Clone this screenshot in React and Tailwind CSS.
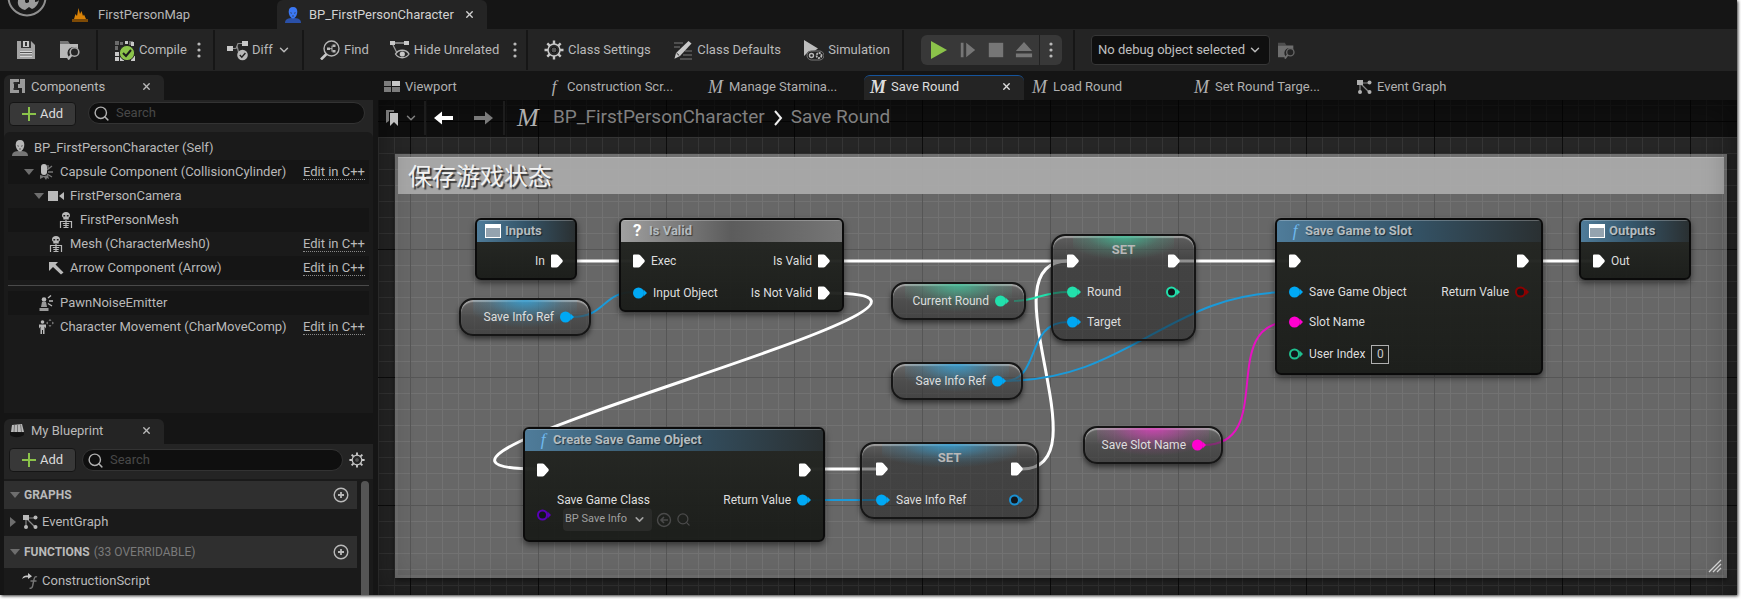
import { ChevronDown, Search, X } from "lucide-react";

/* ---------- icons ---------- */

function Icon({ size = 20, box = "0 0 20 20", children, className = "" }) {
  return (
    <svg width={size} height={size} viewBox={box} fill="currentColor" aria-hidden="true" className={`shrink-0 ${className}`}>
      {children}
    </svg>
  );
}

const SaveIcon = () => (
  <Icon>
    <path d="M1 1h14l4 4v14H1z" fill="#a3a3a3" />
    <path d="M5 1h10v7H5z" fill="#333" />
    <path d="M7 1h6v6H7z" fill="#c8c8c8" />
    <path d="M9 2h2v4H9z" fill="#333" />
    <path d="M4 11h12v6H4z" fill="#d5d5d5" />
    <path d="M4 12.5h12M4 15h12" stroke="#555" />
  </Icon>
);

const BrowseIcon = ({ dim, size = 20 }) => (
  <Icon size={size}>
    <g opacity={dim ? 0.5 : 1}>
      <path d="M0 1h8l2 3H0z" fill="#777" />
      <path d="M0 4h18v5a6 6 0 0 0-9 8l-1 1H0z" fill="#b8b8b8" />
      <circle cx="14.5" cy="12" r="4.3" fill="#242424" stroke="#a8a8a8" strokeWidth="1.6" />
      <path d="M11.5 15l-3.5 4.5" stroke="#b8b8b8" strokeWidth="2.2" />
    </g>
  </Icon>
);

const CompileIcon = () => (
  <Icon size={21} box="0 0 21 21">
    <path d="M1 1h4v4H1zM1 6h3v4H1zM6 2h3v3H6zM15 1h4v4h-4z" fill="#6b6b6b" />
    <path d="M11 1h3v3h-3zM1 12h4v4H1zM1 17h4v4H1zM17 2h3v4h-3zM17 16h4v5h-4zM6 17h4v4H6z" fill="#c8c8c8" />
    <circle cx="13" cy="13" r="7.6" fill="#8bc34a" stroke="#242424" />
    <path d="M9 13l3 3 5-6" fill="none" stroke="#1c1c1c" strokeWidth="2" />
  </Icon>
);

const DiffIcon = () => (
  <Icon size={21} box="0 0 21 21">
    <path d="M0 6h6v5H0zM15 1h6v5h-6z" fill="#c8c8c8" />
    <path d="M6 8.5h3l2-5h4M10 6l2 8" fill="none" stroke="#8a8a8a" strokeWidth="1.2" />
    <circle cx="15.5" cy="15" r="5.3" fill="#b8b8b8" />
    <path d="M12.8 15l2 2.2 3.6-4.2" fill="none" stroke="#222" strokeWidth="1.4" />
  </Icon>
);

const FindIcon = () => (
  <Icon>
    <circle cx="11.5" cy="8.5" r="7.5" fill="none" stroke="#b5b5b5" strokeWidth="1.4" />
    <path d="M6.5 14L1 19.5" stroke="#c8c8c8" strokeWidth="2.6" />
    <path d="M7 7.5h3v2.5H7zM12.5 4.5h3V7h-3zM12.5 10h3v2.5h-3z" />
    <path d="M10 8.7h2M12 5.7v6" stroke="currentColor" fill="none" />
  </Icon>
);

const HideIcon = () => (
  <Icon size={21} box="0 0 21 21">
    <path d="M1 1h5v4H1zM15 1h5v4h-5z" fill="#c8c8c8" />
    <path d="M6 3h9M4 5l4 8" stroke="#9a9a9a" strokeWidth="1.3" fill="none" />
    <path d="M6.5 14c3-5 10.5-5 13.500 0-3 5-10.500 5-13.500 0z" fill="#242424" stroke="#b5b5b5" strokeWidth="1.4" />
    <circle cx="13.3" cy="14" r="2.6" fill="#c8c8c8" />
  </Icon>
);

const GearIcon = ({ size = 20 }) => (
  <Icon size={size}>
    <g stroke="#c8c8c8" strokeWidth="2.4">
      <path d="M10 .5v4M10 15.5v4M.5 10h4M15.5 10h4M3.3 3.3l2.8 2.8M13.9 13.9l2.8 2.8M3.3 16.7l2.8-2.8M13.9 6.1l2.8-2.8" />
    </g>
    <circle cx="10" cy="10" r="6" fill="#2b2b2b" stroke="#c8c8c8" strokeWidth="1.5" />
    <circle cx="10" cy="10" r="3" fill="#555" stroke="#111" />
  </Icon>
);

const DefaultsIcon = () => (
  <Icon>
    <path d="M1 3h9M1 7h6M12 11h7M10 15h9M7 19h12" stroke="#7a7a7a" strokeWidth="1.2" />
    <path d="M15.5 1l3 2.500L7 16l-5.500 2.700L3 13z" fill="#c8c8c8" />
    <path d="M3.5 13l2.700 2.500" stroke="#242424" />
  </Icon>
);

const SimIcon = () => (
  <Icon size={21} box="0 0 21 21">
    <path d="M1 0l14 8.500-3 2-6 .5-5 5z" fill="#bdbdbd" />
    <rect x="4" y="11" width="17" height="9" rx="4.5" fill="#242424" stroke="#777" />
    <circle cx="8.5" cy="15.5" r="2" fill="none" stroke="#b8b8b8" strokeWidth="1.4" />
    <circle cx="16" cy="15.5" r="2.5" fill="none" stroke="#b8b8b8" strokeWidth="1.8" strokeDasharray="2 .8" />
  </Icon>
);

const DotsIcon = () => (
  <Icon size={16} box="0 0 16 16">
    <circle cx="8" cy="2" r="1.6" />
    <circle cx="8" cy="8" r="1.6" />
    <circle cx="8" cy="14" r="1.6" />
  </Icon>
);

const UserIcon = ({ color = "#b8b8b8", base = "#777" }) => (
  <Icon size={16} box="0 0 16 16">
    <path d="M0 16c0-4 3-5 8-5s8 1 8 5z" fill={base} />
    <path d="M8 0c3 0 4.3 2 4.3 4.800S10.500 11.500 8 11.500 3.700 7.600 3.700 4.800 5 0 8 0z" fill={color} />
    <path d="M5.3 5.7l1.700.6M10.700 5.700l-1.700.6M7 9h2" stroke="#333" strokeWidth=".7" />
  </Icon>
);

const MapIcon = () => (
  <Icon size={16} box="0 0 16 16">
    <path d="M2 12l1.500-5 1.500 2L6.500 1l1.500 6 1.500-3 1.500 5 1-1.500L14 12z" fill="#d98207" />
    <path d="M0 12h16v3H0z" fill="#7d4a06" />
  </Icon>
);

const CapsuleIcon = () => (
  <Icon size={16} box="0 0 16 16">
    <path d="M2 11l4 1 4-1 1 4-2-1-1 2-2-3-4 2z" fill="#777" />
    <path d="M9 6l5-4M10 8h5M9 10l5 3M10 5V1" stroke="#777" strokeWidth="1.3" />
    <rect x="3" y="0" width="6" height="11" rx="3" fill="#bdbdbd" />
  </Icon>
);

const CameraIcon = () => (
  <Icon size={16} box="0 0 16 16">
    <path d="M0 3h10v10H0zM11 8l5-4v8z" />
  </Icon>
);

const SkeletonIcon = () => (
  <Icon size={16} box="0 0 16 16">
    <path d="M8 0c2.5 0 4 1.300 4 3.500 0 1.200-.6 1.800-1.300 2.200V7.500H5.300V5.700C4.600 5.300 4 4.700 4 3.500 4 1.300 5.500 0 8 0z" />
    <path d="M5.4 3h1.800v1.500H5.400zM8.800 3h1.800v1.500H8.800z" fill="#1a1a1a" />
    <path d="M2.5 16v-6.500h11V16M8 8v8M4.800 11.500h6.400M5.300 13.500h5.400M5.500 15.500h5" fill="none" stroke="currentColor" strokeWidth="1.2" />
  </Icon>
);

const ArrowCompIcon = () => (
  <Icon size={16} box="0 0 16 16">
    <path d="M1 2h9L7.500 4.500l8 8-2.500 2L5 7l-4 4z" />
  </Icon>
);

const NoiseIcon = () => (
  <Icon size={16} box="0 0 16 16">
    <circle cx="6" cy="4.5" r="2.3" />
    <path d="M4 7h4l1 5H3zM1.500 13h9v3h-9z" fill="#999" />
    <path d="M10 3l3-2.500M11 6h4M10 8.500l4 2.500" stroke="currentColor" strokeWidth="1.4" />
  </Icon>
);

const MoveIcon = () => (
  <Icon size={16} box="0 0 16 16">
    <circle cx="4.5" cy="3" r="1.8" />
    <path d="M1 5.500h7v4l-1.500-2V15h-1.500v-4H4v4H2.500V7.500L1 9.500z" />
    <path d="M12 0l1.500 1.800h-3zM12 8l1.500-1.800h-3zM8 4l1.800-1.500v3zM16 4l-1.800-1.500v3z" fill="#888" />
  </Icon>
);

const GraphIcon = () => (
  <Icon size={16} box="0 0 16 16">
    <path d="M4 4h8M4 4v8M5 5l8 8" stroke="#888" strokeWidth="1.2" />
    <path d="M1 1h6v5H1z" />
    <circle cx="13.5" cy="3.5" r="2" />
    <circle cx="4" cy="13" r="2" />
    <circle cx="13.5" cy="13" r="2" />
  </Icon>
);

const ViewportIcon = () => (
  <Icon size={16} box="0 0 16 16">
    <path d="M0 2h7v5H0zM0 8h7v5H0zM8 8h8v5H8z" fill="#7c7c7c" />
    <path d="M8 2h8v5H8z" fill="#c8c8c8" />
  </Icon>
);

const ComponentsIcon = () => (
  <Icon size={15} box="0 0 15 15">
    <path d="M0 0h9v3H4v8h5v3H0zM10 0h5v14h-3V9H8V5h2z" fill="#9a9a9a" />
    <path d="M3 4h4M3 10h4" stroke="#333" />
  </Icon>
);

const BlueprintIcon = () => (
  <Icon size={15} box="0 0 15 15">
    <path d="M1 9l1-7 10-1 2 8z" fill="#b8b8b8" />
    <path d="M4.5 2L4 9M7.500 1.500V9M10.500 1.500l1 7.500" stroke="#777" />
    <path d="M0 9l14 .5v2.500c-5 3-10 3-14 0z" fill="#111" />
  </Icon>
);

const CtorIcon = () => (
  <Icon size={16} box="0 0 16 16">
    <path d="M15 4c-1.500-1-2.500 0-3 2.500l-1.400 6.500c-.5 2-1.500 2.700-3 2M8.500 8h6" fill="none" stroke="#777" strokeWidth="1.4" />
    <path d="M0 6c1-3 3-4 6-3.500V0l4 3.300L6 6V4.300C3.500 4 2 4.500 0 6z" fill="#c8c8c8" />
  </Icon>
);

const PlusCircle = () => (
  <Icon size={16} box="0 0 16 16">
    <circle cx="8" cy="8" r="6.8" fill="none" stroke="currentColor" strokeWidth="1.4" />
    <path d="M5 8h6M8 5v6" stroke="currentColor" strokeWidth="1.8" />
  </Icon>
);

const WindowIcon = () => (
  <Icon size={16} box="0 0 16 16">
    <path d="M0 1h16v14H0z" fill="#fff" />
    <path d="M1 5h14v9H1z" fill="#94a3af" />
  </Icon>
);

const BookmarkIcon = () => (
  <Icon size={16} box="0 0 16 16">
    <path d="M2 0h8v2H5v9l-3 2z" fill="#777" />
    <path d="M6 3h8v13l-4-4-4 4z" fill="#c0c0c0" />
  </Icon>
);

const NavArrow = ({ flip, color }) => (
  <Icon size={20} className={flip ? "rotate-180" : ""}>
    <path d="M0 10l8-6.500V8h11v4H8v4.500z" fill={color} />
  </Icon>
);

const Caret = ({ right }) => (
  <Icon size={10} box="0 0 10 10" className="text-[#6e6e6e]">
    {right ? <path d="M2 0l6 5-6 5z" /> : <path d="M0 2h10L5 8z" />}
  </Icon>
);

const MacroM = ({ className = "" }) => (
  <span aria-hidden="true" className={`font-['Liberation_Serif',serif] italic ${className}`}>M</span>
);
const FuncF = ({ className = "" }) => (
  <span aria-hidden="true" className={`font-['Liberation_Serif',serif] italic ${className}`}>f</span>
);

/* ---------- shell ---------- */

function TitleBar() {
  return (
    <header className="flex h-[29px] shrink-0 overflow-hidden bg-[#151515] text-[13px]">
      <div className="w-16 shrink-0 pl-[7px]">
        <svg width="40" height="40" viewBox="0 0 40 40" className="-mt-[23px]" role="img" aria-label="Unreal Editor">
          <circle cx="20" cy="20" r="18.5" fill="#1a1a1a" stroke="#8f8f8f" strokeWidth="2" />
          <path d="M11 12c3-3 5-3 7-3v15c0 2 2 3 4 1V11l6-3v17c2 0 3-1 4-2-1 5-4 8-7 9l-3-2-4 3c-5-1-8-5-7-9z" fill="#9b9b9b" />
        </svg>
      </div>
      <a href="#map" className="flex w-[213px] items-center gap-2.5 pl-2 text-[#b5b5b5]">
        <MapIcon />
        FirstPersonMap
      </a>
      <div className="flex w-[210px] items-center rounded-t-md bg-[#242424] pl-2 text-[#d2d2d2]">
        <a href="#character" className="flex items-center gap-2">
          <UserIcon color="#3b78f5" base="#2a50a8" />
          BP_FirstPersonCharacter
        </a>
        <button aria-label="Close tab" className="ml-2.5"><X size={11} strokeWidth={3} /></button>
      </div>
    </header>
  );
}

function ToolButton({ icon, children, label, className = "" }) {
  return (
    <button aria-label={label} className={`flex items-center gap-1 ${className}`}>
      {icon}
      {children}
    </button>
  );
}

const Sep = () => <span className="h-[40px] w-0.5 bg-[#161616]" />;

function Toolbar() {
  return (
    <div className="flex h-[42px] shrink-0 items-center bg-[#242424] text-[13px] text-[#b9b9b9]">
      <div className="flex w-24 items-center gap-6 pl-4">
        <ToolButton icon={<SaveIcon />} label="Save" />
        <ToolButton icon={<BrowseIcon />} label="Browse" />
      </div>
      <Sep />
      <div className="flex w-[115px] items-center justify-between pl-4 pr-1.5">
        <ToolButton icon={<CompileIcon />}>Compile</ToolButton>
        <ToolButton icon={<DotsIcon />} label="Compile options" />
      </div>
      <Sep />
      <div className="flex w-[87px] items-center pl-3">
        <ToolButton icon={<DiffIcon />}>
          Diff
          <ChevronDown size={14} strokeWidth={2.5} />
        </ToolButton>
      </div>
      <Sep />
      <div className="flex w-[222px] items-center gap-5 pl-4">
        <ToolButton icon={<FindIcon />}>Find</ToolButton>
        <div className="flex items-center gap-2">
          <ToolButton icon={<HideIcon />}>Hide Unrelated</ToolButton>
          <ToolButton icon={<DotsIcon />} label="Hide options" />
        </div>
      </div>
      <Sep />
      <div className="flex w-[374px] items-center justify-between pl-4 pr-3">
        <ToolButton icon={<GearIcon />}>Class Settings</ToolButton>
        <ToolButton icon={<DefaultsIcon />}>Class Defaults</ToolButton>
        <ToolButton icon={<SimIcon />}>Simulation</ToolButton>
      </div>
      <Sep />
      <div className="flex w-[169px] items-center pl-[17px]">
        <div className="flex h-[30px] w-[141px] items-center rounded-md bg-[#383838] text-[#767676]">
          <div className="flex flex-1 items-center justify-between pl-2 pr-1.5">
            <button aria-label="Play" className="text-[#8bc34a]"><Icon size={20}><path d="M2 1l16 9-16 9z" /></Icon></button>
            <button aria-label="Step"><Icon size={18}><path d="M2 2h3v16H2zM8 2l10 8-10 8z" /></Icon></button>
            <button aria-label="Stop"><Icon size={18}><path d="M2 2h16v16H2z" /></Icon></button>
            <button aria-label="Eject"><Icon size={18}><path d="M10 1l9 10H1zM1 14h18v4H1z" /></Icon></button>
          </div>
          <button aria-label="Play options" className="flex h-[30px] w-[23px] items-center justify-center border-l border-[#222] text-[#b9b9b9]"><DotsIcon /></button>
        </div>
      </div>
      <Sep />
      <div className="relative ml-4 flex items-center">
        <select aria-label="Debug object" className="h-[30px] w-[179px] appearance-none rounded-[4px] border border-[#363636] bg-[#0f0f0f] pl-1.5 text-[13px] text-[#c0c0c0]">
          <option>No debug object selected</option>
        </select>
        <ChevronDown size={14} strokeWidth={2.5} className="pointer-events-none absolute right-2" />
      </div>
      <ToolButton icon={<BrowseIcon dim size={17} />} label="Browse debug object" className="ml-2" />
    </div>
  );
}

/* ---------- left column ---------- */

function PanelTab({ icon, children }) {
  return (
    <div className="flex h-[25px] w-[160px] items-center gap-1.5 rounded-t-md bg-[#242424] pr-3 pb-0.5 pl-1.5 text-[13px] text-[#b9b9b9]">
      {icon}
      <h2 className="flex-1">{children}</h2>
      <button aria-label="Close panel"><X size={11} strokeWidth={3} /></button>
    </div>
  );
}

function AddButton() {
  return (
    <button className="flex h-[24px] w-[67px] shrink-0 items-center justify-center gap-1 rounded-[4px] border border-[#151515] bg-[#383838] text-[13px] text-[#dcdcdc]">
      <Icon size={14} box="0 0 14 14" className="text-[#8bc34a]"><path d="M6 0h2v6h6v2H8v6H6V8H0V6h6z" /></Icon>
      Add
    </button>
  );
}

function SearchBox({ label }) {
  return (
    <label className="flex h-[22px] flex-1 items-center gap-1.5 rounded-full border border-[#333] bg-[#0f0f0f] pl-1 text-[#b0b0b0]">
      <Search size={17} strokeWidth={2} className="shrink-0" />
      <input aria-label={label} placeholder="Search" className="w-full min-w-0 bg-transparent text-[13px] outline-none placeholder:text-[#484848]" />
    </label>
  );
}

function TreeRow({ pad, caret, icon, name, native, dark }) {
  return (
    <li className={`flex h-6 items-center pr-1 ${pad} ${dark ? "bg-[#151515]" : ""}`}>
      {caret && <span className="mr-1 flex"><Caret /></span>}
      {icon}
      <span className="ml-1.5 flex-1 whitespace-nowrap">{name}</span>
      {native && <a href="#source" className="border-b border-dotted border-[#888] leading-[15px]">Edit in C++</a>}
    </li>
  );
}

function ComponentsPanel() {
  return (
    <section>
      <PanelTab icon={<ComponentsIcon />}>Components</PanelTab>
      <div className="bg-[#242424]">
        <div className="flex h-8 items-start gap-3 pl-[5px] pr-2 pt-0.5">
          <AddButton />
          <SearchBox label="Search components" />
        </div>
        <div className="h-[281px] rounded-t-md bg-[#1a1a1a] px-1 pt-1 text-[13px] text-[#b9b9b9]">
          <ul>
            <TreeRow pad="pl-1" icon={<UserIcon />} name="BP_FirstPersonCharacter (Self)" />
            <TreeRow pad="pl-4" caret icon={<CapsuleIcon />} name="Capsule Component (CollisionCylinder)" native dark />
            <TreeRow pad="pl-[26px]" caret icon={<CameraIcon />} name="FirstPersonCamera" />
            <TreeRow pad="pl-[50px]" icon={<SkeletonIcon />} name="FirstPersonMesh" dark />
            <TreeRow pad="pl-10" icon={<SkeletonIcon />} name="Mesh (CharacterMesh0)" native />
            <TreeRow pad="pl-10" icon={<ArrowCompIcon />} name="Arrow Component (Arrow)" native dark />
          </ul>
          <hr className="my-[5px] border-[#4a4a4a]" />
          <ul>
            <TreeRow pad="pl-[30px]" icon={<NoiseIcon />} name="PawnNoiseEmitter" dark />
            <TreeRow pad="pl-[30px]" icon={<MoveIcon />} name="Character Movement (CharMoveComp)" native />
          </ul>
        </div>
      </div>
    </section>
  );
}

function SectionHead({ children, note, h }) {
  return (
    <div className={`flex items-center gap-1 bg-[#2f2f2f] pl-1.5 pr-2 text-[12px] ${h}`}>
      <Caret />
      <h3 className="font-bold">{children}</h3>
      <span className="flex-1 text-[#7a7a7a]">{note}</span>
      <button aria-label="Add item"><PlusCircle /></button>
    </div>
  );
}

function BlueprintPanel() {
  return (
    <section className="flex min-h-0 flex-1 flex-col">
      <PanelTab icon={<BlueprintIcon />}>My Blueprint</PanelTab>
      <div className="flex h-[35px] shrink-0 items-center gap-1.5 bg-[#242424] pb-[3px] pl-[5px] pr-2">
        <AddButton />
        <SearchBox label="Search blueprint" />
        <button aria-label="View options"><GearIcon size={16} /></button>
      </div>
      <div className="flex min-h-0 flex-1 overflow-hidden bg-[#1a1a1a] pt-0.5 text-[13px] text-[#b9b9b9]">
        <div className="flex-1">
          <SectionHead h="h-7">GRAPHS</SectionHead>
          <div className="flex h-[27px] items-center gap-1 pb-0.5 pl-1">
            <Caret right />
            <GraphIcon />
            EventGraph
          </div>
          <SectionHead h="h-8" note="(33 OVERRIDABLE)">FUNCTIONS</SectionHead>
          <div className="flex h-[25px] items-center gap-1 pl-[18px]">
            <CtorIcon />
            ConstructionScript
          </div>
        </div>
        <div className="w-4 pl-1">
          <div className="h-full w-2 rounded-t-full bg-[#555]" />
        </div>
      </div>
    </section>
  );
}

/* ---------- graph nodes ---------- */

const ExecPin = () => (
  <svg width="12" height="14" viewBox="0 0 12 14" className="shrink-0" aria-hidden="true">
    <path d="M0 1.500Q0 .5 1 .5H5.500Q6.500.500 7.200 1.300L11.500 6Q12 7 11.500 8L7.200 12.700Q6.500 13.500 5.500 13.500H1Q0 13.500 0 12.500z" fill="#fff" />
  </svg>
);

const BLUE = "#00a8f4";
const GREEN = "#22e0ac";
const PINK = "#ff00d0";

function DataPin({ color, hollow }) {
  return (
    <svg width="14" height="12" viewBox="0 0 14 12" className="shrink-0" aria-hidden="true">
      <path d="M10.5 2.500L14 6l-3.500 3.500z" fill={color} />
      {hollow ? (
        <circle cx="5.5" cy="6" r="4.5" fill="#12161a" stroke={color} strokeWidth="2" />
      ) : (
        <circle cx="5.5" cy="6" r="5.5" fill={color} />
      )}
    </svg>
  );
}

function PinRow({ h = "h-8", left, right }) {
  return (
    <div className={`flex items-center justify-between ${h}`}>
      <div className="flex items-center gap-1.5">{left}</div>
      <div className="flex items-center gap-1.5">{right}</div>
    </div>
  );
}

function Node({ pos, title, icon, tint, children }) {
  return (
    <article className={`absolute overflow-hidden rounded-md border-2 border-[#0b0b0b] bg-[#191b18]/95 shadow-[0_3px_6px_rgba(0,0,0,0.5)] ${pos}`}>
      <div className={`flex h-[22px] items-center gap-1 border-t border-white/25 pb-0.5 ${tint}`}>
        {icon}
        <h3 className="text-[13px] font-bold whitespace-nowrap text-[#b4bcc0] [text-shadow:1px_1px_1px_#0008]">{title}</h3>
      </div>
      <div className="bg-linear-to-b from-[#2a2c28]/60 to-transparent px-3 pt-[3px]">{children}</div>
    </article>
  );
}

const BLUE_TINT = "bg-linear-to-r from-[#4f7c9a] via-[#345468] to-[#2a3032]";
const SHELL = "absolute overflow-hidden border-2 border-[#161616] shadow-[0_3px_5px_rgba(0,0,0,0.5),inset_0_2px_1px_rgba(255,255,255,0.4)] bg-linear-to-b";

function VarNode({ pos, glow, name, color }) {
  return (
    <article className={`${SHELL} flex items-center justify-end gap-1.5 rounded-[14px] from-[#6a6a6a]/60 via-[#3c3c3c]/60 to-[#2e2e2e]/60 pr-[15px] ${pos}`}>
      <span className={`absolute inset-x-3 top-0 h-7 ${glow}`} />
      <span className="relative">{name}</span>
      <span className="relative flex"><DataPin color={color} /></span>
    </article>
  );
}

function SetNode({ pos, glow, children }) {
  return (
    <article className={`${SHELL} rounded-[14px] from-[#555]/50 via-[#1e1e1e]/50 via-25% to-[#1a1a1a]/50 px-3.5 pt-[9px] ${pos}`}>
      <span className={`absolute inset-x-5 top-0 h-6 ${glow}`} />
      <h3 className="absolute inset-x-0 top-1 text-center text-[13px] font-bold text-[#b8b8b8]">SET</h3>
      <div className="relative">{children}</div>
    </article>
  );
}

const GLOW_BLUE = "bg-[radial-gradient(ellipse_60%_100%_at_50%_0%,#2fa3dccc,#2fa3dc33_60%,transparent)]";
const GLOW_GREEN = "bg-[radial-gradient(ellipse_60%_100%_at_50%_0%,#3fc49bcc,#3fc49b33_60%,transparent)]";
const GLOW_PINK = "bg-[radial-gradient(ellipse_60%_100%_at_50%_0%,#e03cc0cc,#e03cc033_60%,transparent)]";

function Wires() {
  return (
    <svg className="absolute inset-0 h-full w-full" fill="none" aria-hidden="true">
      <g stroke="#fff" strokeWidth="3">
        <path d="M184 161H256" />
        <path d="M450 161H690" />
        <path d="M450 193C676 193 -66 369 160 369" />
        <path d="M432 369H498" />
        <path d="M644 369C729 369 604 161 690 161" />
        <path d="M800 161H912" />
        <path d="M1150 161H1216" />
      </g>
      <g strokeWidth="2">
        <path d="M194 217C228 217 224 192 256 192" stroke="#1b9ad9" />
        <path d="M626 281C664 281 646 222 690 222" stroke="#1b9ad9" />
        <path d="M626 281C752 281 790 192 912 192" stroke="#1b9ad9" />
        <path d="M432 400H498" stroke="#1b9ad9" />
        <path d="M636 201C658 201 664 192 690 192" stroke={GREEN} />
        <path d="M826 345C900 345 838 222 912 222" stroke="#e612c2" />
      </g>
    </svg>
  );
}

const HeadF = () => <FuncF className="w-3 text-center text-[17px] leading-none text-[#6fb9ee]" />;

function Canvas() {
  return (
    <div className="relative min-h-0 flex-1 overflow-hidden bg-[#262626] [background-image:linear-gradient(to_right,#0d0d0d_1px,transparent_1px),linear-gradient(to_bottom,#0d0d0d_1px,transparent_1px),linear-gradient(to_right,#353535_1px,transparent_1px),linear-gradient(to_bottom,#353535_1px,transparent_1px)] [background-position:32px_21px,32px_21px,0px_5px,0px_5px] [background-size:128px_128px,128px_128px,16px_16px,16px_16px] text-[12px] text-[#dedede]">
      <div className="absolute top-[54px] right-[10px] bottom-[17px] left-[17px] border-[3px] border-white/5 bg-white/30 shadow-[0_2px_6px_rgba(0,0,0,0.6)]">
        <h2 className="h-[37px] border-t border-white/20 bg-[#aaa]/95 pl-2.5 font-['Noto_Sans_CJK_SC',sans-serif] text-[24px] leading-[34px] text-[#f2f2f2] [text-shadow:2px_2px_1px_#333]">保存游戏状态</h2>
        <svg width="14" height="14" viewBox="0 0 14 14" stroke="#ddd" className="absolute right-0.5 bottom-0.5" aria-hidden="true">
          <path d="M1 13L13 1M5 13l8-8M9 13l4-4" strokeWidth="1.3" />
        </svg>
      </div>

      <Wires />

      <Node pos="left-[97px] top-[118px] h-[62px] w-[102px]" title="Inputs" icon={<WindowIcon />} tint={`pl-2 ${BLUE_TINT}`}>
        <PinRow right={<>In<ExecPin /></>} />
      </Node>

      <VarNode pos="left-[81px] top-[198px] h-[38px] w-[132px]" glow={GLOW_BLUE} name="Save Info Ref" color={BLUE} />

      <Node
        pos="left-[241px] top-[118px] h-[94px] w-[225px]"
        title="Is Valid"
        icon={<span aria-hidden="true" className="w-3 text-[17px] leading-none font-bold text-white">?</span>}
        tint="pl-3 bg-linear-to-r from-[#a0a0a0] via-[#5c5c5c] to-[#767676]"
      >
        <PinRow left={<><ExecPin />Exec</>} right={<>Is Valid<ExecPin /></>} />
        <PinRow left={<><DataPin color={BLUE} />Input Object</>} right={<>Is Not Valid<ExecPin /></>} />
      </Node>

      <VarNode pos="left-[513px] top-[182px] h-[38px] w-[135px]" glow={GLOW_GREEN} name="Current Round" color={GREEN} />
      <VarNode pos="left-[513px] top-[262px] h-[38px] w-[132px]" glow={GLOW_BLUE} name="Save Info Ref" color={BLUE} />
      <VarNode pos="left-[705px] top-[326px] h-[38px] w-[140px]" glow={GLOW_PINK} name="Save Slot Name" color={PINK} />

      <SetNode pos="left-[673px] top-[134px] h-[107px] w-[145px]" glow={GLOW_GREEN}>
        <PinRow left={<ExecPin />} right={<ExecPin />} />
        <PinRow h="h-[30px]" left={<><DataPin color={GREEN} />Round</>} right={<DataPin color={GREEN} hollow />} />
        <PinRow h="h-[30px]" left={<><DataPin color={BLUE} />Target</>} />
      </SetNode>

      <Node pos="left-[897px] top-[118px] h-[157px] w-[268px]" title="Save Game to Slot" icon={<HeadF />} tint={`pl-3 ${BLUE_TINT}`}>
        <PinRow left={<ExecPin />} right={<ExecPin />} />
        <PinRow h="h-[30px]" left={<><DataPin color={BLUE} />Save Game Object</>} right={<>Return Value<DataPin color="#8e0000" hollow /></>} />
        <PinRow h="h-[30px]" left={<><DataPin color={PINK} />Slot Name</>} />
        <PinRow
          h="h-[34px]"
          left={
            <>
              <DataPin color="#1fbf8f" hollow />
              <label htmlFor="user-index">User Index</label>
              <input id="user-index" defaultValue="0" className="h-[19px] w-[18px] border border-[#b0b0b0] bg-transparent text-center text-[12px] text-[#c8c8c8] outline-none" />
            </>
          }
        />
      </Node>

      <Node pos="left-[1201px] top-[118px] h-[62px] w-[112px]" title="Outputs" icon={<WindowIcon />} tint={`pl-2 ${BLUE_TINT}`}>
        <PinRow left={<><ExecPin />Out</>} />
      </Node>

      <Node pos="left-[145px] top-[327px] h-[115px] w-[302px]" title="Create Save Game Object" icon={<HeadF />} tint={`pl-3 ${BLUE_TINT}`}>
        <PinRow left={<ExecPin />} right={<ExecPin />} />
        <div className="flex items-start justify-between">
          <div className="flex items-center gap-1.5 pt-1.5">
            <span className="mt-1.5 flex"><DataPin color="#5a00b8" hollow /></span>
            <div>
              <label htmlFor="save-class" className="block leading-4">Save Game Class</label>
              <div className="relative ml-1.5 flex items-center gap-1 text-[#4a4a4a]">
                <select id="save-class" className="h-[23px] w-[89px] appearance-none rounded-sm bg-[#2a2b29] pl-0.5 text-[11px] text-[#a0a0a0]">
                  <option>BP Save Info</option>
                </select>
                <ChevronDown size={13} strokeWidth={3} className="pointer-events-none absolute left-[70px] text-[#a0a0a0]" />
                <button aria-label="Use selected asset">
                  <Icon size={16} box="0 0 16 16">
                    <circle cx="8" cy="8" r="6.5" fill="none" stroke="currentColor" strokeWidth="1.4" />
                    <path d="M12 8H5M8 5L5 8l3 3" fill="none" stroke="currentColor" strokeWidth="1.6" />
                  </Icon>
                </button>
                <button aria-label="Browse to asset"><Search size={15} /></button>
              </div>
            </div>
          </div>
          <div className="flex h-7 items-center gap-1.5">Return Value<DataPin color={BLUE} /></div>
        </div>
      </Node>

      <SetNode pos="left-[482px] top-[342px] h-[77px] w-[179px]" glow={GLOW_BLUE}>
        <PinRow left={<ExecPin />} right={<ExecPin />} />
        <PinRow h="h-[30px]" left={<><DataPin color={BLUE} />Save Info Ref</>} right={<DataPin color="#1b8fd0" hollow />} />
      </SetNode>

      <div className="pointer-events-none absolute inset-0 shadow-[inset_0_0_32px_rgba(0,0,0,0.45)]" />

      <nav aria-label="Breadcrumb" className="absolute inset-x-0 top-0 flex h-[37px] items-center bg-black/60 pb-0.5 text-[19px] text-[#808080]">
        <button aria-label="Bookmarks" className="flex w-[46px] items-center gap-1 pl-1.5">
          <BookmarkIcon />
          <ChevronDown size={14} strokeWidth={2.5} />
        </button>
        <span className="h-[34px] w-0.5 bg-[#1d1d1d]" />
        <button aria-label="Back" className="ml-2"><NavArrow color="#fff" /></button>
        <button aria-label="Forward" className="ml-[19px]"><NavArrow flip color="#7a7a7a" /></button>
        <span className="ml-2.5 h-[34px] w-0.5 bg-[#1d1d1d]" />
        <MacroM className="ml-3 w-[36px] text-[26px] leading-none text-[#b0b0b0]" />
        <a href="#character">BP_FirstPersonCharacter</a>
        <svg width="10" height="16" viewBox="0 0 10 16" fill="none" stroke="#eee" strokeWidth="2" className="mx-2" aria-hidden="true"><path d="M2 1l6 7-6 7" /></svg>
        <a href="#save-round">Save Round</a>
      </nav>
    </div>
  );
}

const TABS = [
  { name: "Viewport", icon: <ViewportIcon /> },
  { name: "Construction Scr...", icon: <FuncF className="w-4 text-center text-[17px] leading-none" /> },
  { name: "Manage Stamina...", icon: <MacroM className="w-4 text-[18px] leading-none" /> },
  { name: "Save Round", icon: <MacroM className="w-4 text-[18px] leading-none font-bold" />, active: true },
  { name: "Load Round", icon: <MacroM className="w-4 text-[18px] leading-none" /> },
  { name: "Set Round Targe...", icon: <MacroM className="w-4 text-[18px] leading-none" /> },
  { name: "Event Graph", icon: <GraphIcon /> },
];

function GraphTabs() {
  return (
    <div className="flex h-[25px] shrink-0 gap-0.5 text-[13px] text-[#b0b0b0]">
      {TABS.map((t) => (
        <div
          key={t.name}
          className={`flex w-[160px] items-center rounded-t-md border-t pr-3 pb-[3px] pl-1.5 ${t.active ? "border-[#15549c] bg-[#242424] text-[#dedede]" : "border-transparent"}`}
        >
          <a href="#graph" className="flex flex-1 items-center gap-[5px] whitespace-nowrap">
            {t.icon}
            {t.name}
          </a>
          {t.active && <button aria-label="Close graph"><X size={11} strokeWidth={3} /></button>}
        </div>
      ))}
    </div>
  );
}

export default function App() {
  return (
    <div className="h-screen min-h-[400px] overflow-hidden bg-white pr-1 pb-1 font-[Roboto,'Noto_Sans_CJK_SC',sans-serif] leading-normal">
      <div className="flex h-full flex-col bg-[#151515] shadow-[1px_1px_3px_rgba(0,0,0,0.8)]">
        <TitleBar />
        <Toolbar />
        <main className="flex min-h-0 flex-1 gap-[5px] pt-1 pl-1">
          <div className="flex w-[369px] shrink-0 flex-col gap-1.5">
            <ComponentsPanel />
            <BlueprintPanel />
          </div>
          <div className="flex min-w-0 flex-1 flex-col">
            <GraphTabs />
            <Canvas />
          </div>
        </main>
      </div>
    </div>
  );
}
